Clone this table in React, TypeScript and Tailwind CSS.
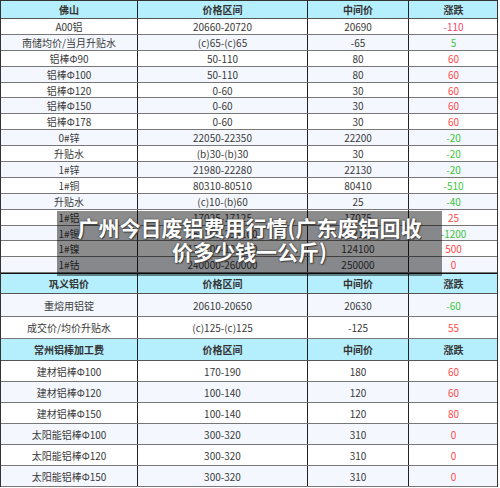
import React from "react";

type Change = { v: string; tone: "red" | "green" | "pink" };

interface RowData {
  name: string;
  range: string;
  mid: string;
  change: Change;
}

const r = (v: string): Change => ({ v, tone: "red" });
const g = (v: string): Change => ({ v, tone: "green" });

// 佛山
const foshan: RowData[] = [
  { name: "A00铝", range: "20660-20720", mid: "20690", change: { v: "-110", tone: "pink" } },
  { name: "南储均价/当月升贴水", range: "(c)65-(c)65", mid: "-65", change: g("5") },
  { name: "铝棒Φ90", range: "50-110", mid: "80", change: r("60") },
  { name: "铝棒Φ100", range: "50-110", mid: "80", change: r("60") },
  { name: "铝棒Φ120", range: "0-60", mid: "30", change: r("60") },
  { name: "铝棒Φ150", range: "0-60", mid: "30", change: r("60") },
  { name: "铝棒Φ178", range: "0-60", mid: "30", change: r("60") },
  { name: "0#锌", range: "22050-22350", mid: "22200", change: g("-20") },
  { name: "升贴水", range: "(b)30-(b)30", mid: "30", change: g("-20") },
  { name: "1#锌", range: "21980-22280", mid: "22130", change: g("-20") },
  { name: "1#铜", range: "80310-80510", mid: "80410", change: g("-510") },
  { name: "升贴水", range: "(c)10-(b)60", mid: "25", change: g("-40") },
  { name: "1#铝", range: "17025-17125", mid: "17075", change: r("25") },
  { name: "1#锡", range: "251100-253100", mid: "252100", change: g("-1200") },
  { name: "1#镍", range: "123100-125100", mid: "124100", change: r("500") },
  { name: "1#钴", range: "240000-260000", mid: "250000", change: r("0") },
];

// 巩义
const gongyi: RowData[] = [
  { name: "重熔用铝锭", range: "20610-20650", mid: "20630", change: g("-60") },
  { name: "成交价/均价升贴水", range: "(c)125-(c)125", mid: "-125", change: r("55") },
];

// 常州
const changzhou: RowData[] = [
  { name: "建材铝棒Φ100", range: "170-190", mid: "180", change: r("60") },
  { name: "建材铝棒Φ120", range: "100-140", mid: "120", change: r("60") },
  { name: "建材铝棒Φ150", range: "100-140", mid: "120", change: r("80") },
  { name: "太阳能铝棒Φ100", range: "300-320", mid: "310", change: r("0") },
  { name: "太阳能铝棒Φ120", range: "300-320", mid: "310", change: r("0") },
  { name: "太阳能铝棒Φ150", range: "300-320", mid: "310", change: r("0") },
];

const toneClass = {
  red: "text-[#ff4a4a]",
  green: "text-[#3ec43e]",
  pink: "text-[#f2466f]",
};

function HeaderRow({ title, h }: { title: string; h: string }) {
  return (
    <div className={`grid grid-cols-[137px_170px_101px_89px] bg-[#b5eefc] border-b border-[#555] font-bold text-[#333] ${h}`}>
      <div className="flex items-center justify-center border-r border-[#222]">{title}</div>
      <div className="flex items-center justify-center border-r border-[#222]">价格区间</div>
      <div className="flex items-center justify-center border-r border-[#222]">中间价</div>
      <div className="flex items-center justify-center">涨跌</div>
    </div>
  );
}

function DataRow({ row, h, alt }: { row: RowData; h: string; alt: boolean }) {
  return (
    <div
      className={`grid grid-cols-[137px_170px_101px_89px] border-b border-[#777] text-[#3a3a3a] ${h} ${
        alt ? "bg-[#f4f8fe]" : "bg-white"
      }`}
    >
      <div className="flex items-center justify-center border-r border-[#222] whitespace-nowrap">{row.name}</div>
      <div className="flex items-center justify-center border-r border-[#222] whitespace-nowrap">{row.range}</div>
      <div className="flex items-center justify-center border-r border-[#222]">{row.mid}</div>
      <div className={`flex items-center justify-center ${toneClass[row.change.tone]}`}>{row.change.v}</div>
    </div>
  );
}

export default function App() {
  return (
    <div className="w-[500px] h-[488px] bg-white overflow-hidden font-['Noto_Sans_CJK_SC','Noto_Sans',sans-serif] text-[10px]">
      <div className="relative w-[498px] border-l border-r border-[#333]">
        {/* cut-off row above */}
        <div className="grid grid-cols-[137px_170px_101px_89px] h-px bg-[#333]" />

        {/* 佛山 */}
        <HeaderRow title="佛山" h="h-[18px]" />
        {foshan.map((row, i) => (
          <DataRow key={i} row={row} h="h-[15.9px]" alt={i % 2 === 1} />
        ))}

        {/* 巩义 */}
        <div className="border-t border-[#111]">
          <HeaderRow title="巩义铝价" h="h-[20px]" />
        </div>
        <DataRow row={gongyi[0]} h="h-[23px]" alt={true} />
        <DataRow row={gongyi[1]} h="h-[22px]" alt={false} />

        {/* 常州 */}
        <HeaderRow title="常州铝棒加工费" h="h-[22px]" />
        {changzhou.map((row, i) => (
          <DataRow key={i} row={row} h="h-[21px]" alt={i % 2 === 1} />
        ))}

        {/* 标题浮层 */}
        <div className="absolute left-[56px] top-[211px] w-[385px] h-[65px] bg-black/45 flex flex-col items-center justify-start pt-[4px]">
          <div className="text-white font-bold text-[21px] leading-[24px] [text-shadow:0_0_2px_#333,1px_1px_1px_#444] whitespace-nowrap">
            广州今日废铝费用行情(广东废铝回收
          </div>
          <div className="text-white font-bold text-[21px] leading-[24px] [text-shadow:0_0_2px_#333,1px_1px_1px_#444] whitespace-nowrap">
            价多少钱一公斤)
          </div>
        </div>
      </div>
    </div>
  );
}
